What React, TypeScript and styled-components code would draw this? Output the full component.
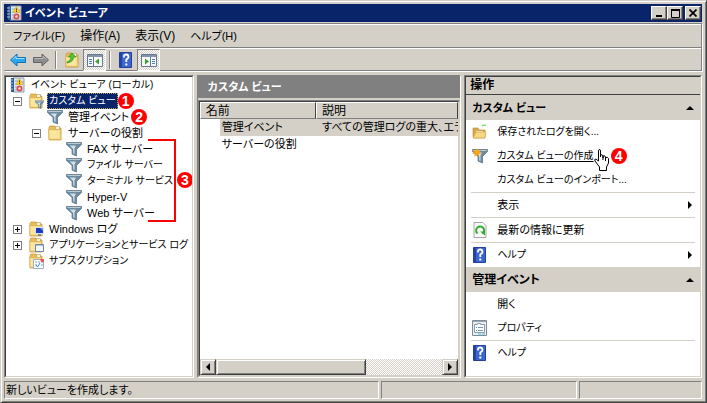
import React from 'react';
import styled, { createGlobalStyle, css } from 'styled-components';

const face = '#d4d0c8';
const shadow = '#808080';
const dark = '#404040';

const Global = createGlobalStyle`
  * { box-sizing: border-box; }
  html, body, #root { height: 100%; }
  body {
    margin: 0;
    background: ${face};
    color: #000;
    font: 12px/16px "Liberation Sans", "Noto Sans CJK JP", sans-serif;
    font-feature-settings: "palt";
  }
  button { font: inherit; font-feature-settings: inherit; color: inherit; padding: 0; border: 0; background: none; text-align: left; white-space: nowrap; }
  ul { margin: 0; padding: 0; list-style: none; }
  h1, h2, h3 { margin: 0; font: inherit; font-weight: bold; white-space: nowrap; }
  svg { display: block; flex: none; }
`;

const raised = css`
  border: 1px solid;
  border-color: ${face} ${dark} ${dark} ${face};
  box-shadow: inset 1px 1px #fff, inset -1px -1px ${shadow};
  background: ${face};
`;

const Window = styled.div`
  ${raised}
  height: 100vh;
  display: flex;
  flex-direction: column;
  padding: 3px 4px 3px 3px;
  overflow: hidden;
`;
const TitleBar = styled.header`
  display: flex;
  align-items: center;
  flex: none;
  height: 18px;
  padding: 0 1px 0 3px;
  background: #0a246a;
  color: #fff;
  h1 { flex: 1; padding-left: 2px; font-size: 11px; }
`;
const WindowButton = styled.button<{ $apart?: boolean }>`
  ${raised}
  border-color: #fff ${dark} ${dark} #fff;
  box-shadow: inset -1px -1px ${shadow};
  display: grid;
  place-items: center;
  width: 16px;
  height: 14px;
  margin-left: ${(p) => (p.$apart ? 2 : 0)}px;
`;
const Bars = styled.div`
  flex: none;
  margin-top: 1px;
  border: 1px solid ${shadow};
  border-left-color: ${face};
  box-shadow: 1px 1px #fff;
`;
const MenuBar = styled.nav`
  display: flex;
  align-items: center;
  gap: 15px;
  height: 24px;
  padding-left: 8px;
  border-top: 1px solid #fff;
  border-bottom: 1px solid ${shadow};
`;
const MenuItem = styled.button<{ $kana?: boolean }>`
  font-size: ${(p) => (p.$kana ? 11 : 12)}px;
`;
const ToolBar = styled.div`
  display: flex;
  align-items: center;
  height: 22px;
  padding-left: 1px;
  border-top: 1px solid #fff;
`;
const Tool = styled.button<{ $pressed?: boolean }>`
  display: grid;
  place-items: center;
  width: 23px;
  height: 22px;
  ${(p) =>
    p.$pressed &&
    css`
      border: 1px solid;
      border-color: ${shadow} #fff #fff ${shadow};
      background: repeating-conic-gradient(#fff 0 25%, ${face} 0 50%) 0 0 / 2px 2px;
    `}
`;
const ToolDivider = styled.span`
  width: 2px;
  height: 18px;
  margin: 0 3px;
  border-left: 1px solid ${shadow};
  border-right: 1px solid #fff;
`;
const Panes = styled.main`
  flex: 1;
  min-height: 0;
  display: grid;
  grid-template-columns: 190fr 265fr 238fr;
  gap: 3px;
  margin-top: 4px;
`;
const Pane = styled.section`
  display: flex;
  flex-direction: column;
  min-width: 0;
  min-height: 0;
  border: 1px solid;
  border-color: ${shadow} #fff #fff ${shadow};
`;
const Well = styled.div`
  flex: 1;
  display: flex;
  flex-direction: column;
  min-height: 0;
  overflow: hidden;
  border: 1px solid;
  border-color: ${dark} ${face} ${face} ${dark};
  background: #fff;
`;

const TreeRow = styled.div<{ $level: number }>`
  display: flex;
  align-items: center;
  height: 16px;
  padding-left: ${(p) => (p.$level ? 7 + (p.$level - 1) * 19 : 4)}px;
`;
const Expander = styled.button`
  display: grid;
  place-items: center;
  width: 9px;
  height: 9px;
  border: 1px solid ${shadow};
`;
const Slot = styled.span<{ $root?: boolean }>`
  flex: none;
  display: flex;
  align-items: center;
  width: ${(p) => (p.$root ? 0 : 15)}px;
`;
const TreeLabel = styled.button<{ $selected?: boolean; $small: boolean }>`
  height: 16px;
  margin-left: 3px;
  padding: 0 2px;
  font-size: ${(p) => (p.$small ? 10 : 11)}px;
  ${(p) =>
    p.$selected &&
    css`
      background: #0a246a;
      color: #fff;
      outline: 1px dotted #b9a45a;
      outline-offset: -1px;
    `}
`;
const Badge = styled.span`
  flex: none;
  display: grid;
  place-items: center;
  width: 16px;
  height: 16px;
  border-radius: 50%;
  background: #f00;
  color: #fff;
  font: bold 14px/16px "Liberation Sans", sans-serif;
`;
const Group = styled.ul`
  position: relative;
`;
const Bracket = styled.span`
  position: absolute;
  top: -2px;
  bottom: -1px;
  left: 142px;
  width: 28px;
  border: 2px solid #f00;
  border-left: 0;
  pointer-events: none;
`;
const GroupBadge = styled(Badge)`
  position: absolute;
  top: 31px;
  left: 171px;
`;

const Caption = styled.h2`
  flex: none;
  height: 22px;
  padding-left: 10px;
  line-height: 22px;
  background: ${shadow};
  color: #fff;
  font-size: 11px;
`;
const ListFrame = styled.div`
  flex: 1;
  display: flex;
  min-height: 0;
  margin-top: 2px;
  border: 1px solid;
  border-color: ${shadow} ${face} ${face} ${shadow};
`;
const List = styled.table`
  width: 100%;
  table-layout: fixed;
  border-collapse: separate;
  border-spacing: 0;
  th {
    ${raised}
    border-color: #fff ${dark} ${shadow} #fff;
    box-shadow: none;
    height: 17px;
    padding: 0 5px;
    font-weight: normal;
    text-align: left;
    line-height: 14px;
  }
  th:first-child { width: 45%; }
  td { height: 17px; padding: 0 5px; line-height: 17px; font-size: 11px; white-space: nowrap; overflow: hidden; }
`;
const Cell = styled.span<{ $on?: boolean; $first?: boolean }>`
  display: block;
  margin: 0 -5px 0 ${(p) => (p.$first ? 15 : -5)}px;
  padding-left: ${(p) => (p.$first ? 2 : 6)}px;
  background: ${(p) => (p.$on ? face : 'none')};
`;
const ScrollBar = styled.div`
  display: flex;
  height: 16px;
  margin-top: auto;
  background: repeating-conic-gradient(#fff 0 25%, ${face} 0 50%) 0 0 / 2px 2px;
`;
const ScrollButton = styled.button`
  ${raised}
  display: grid;
  place-items: center;
  width: 16px;
`;
const Thumb = styled.div`
  ${raised}
  width: 58%;
  margin-right: auto;
`;

const ActionsTitle = styled.h2`
  flex: none;
  height: 18px;
  padding-left: 4px;
  line-height: 17px;
  background: ${face};
  border-bottom: 1px solid ${dark};
`;
const SectionHead = styled.h3<{ $kana?: boolean }>`
  display: flex;
  flex: none;
  align-items: center;
  justify-content: space-between;
  height: 25px;
  padding: 0 6px;
  background: ${face};
  font-size: ${(p) => (p.$kana ? 11 : 12)}px;
`;
const Action = styled.button<{ $small?: boolean }>`
  display: flex;
  flex: none;
  align-items: center;
  height: 24px;
  margin: 0 6px;
  font-size: ${(p) => (p.$small ? 10 : 11)}px;
  u { text-underline-offset: 2px; }
`;
const ActionIcon = styled.span`
  width: 25px;
`;
const ActionText = styled.span`
  position: relative;
  margin-right: auto;
`;
const Pointer = styled.span`
  position: absolute;
  top: 1px;
  right: -16px;
`;
const PointerBadge = styled(Badge)`
  position: absolute;
  top: 0;
  right: -33px;
`;
const Rule = styled.hr`
  flex: none;
  width: calc(100% - 10px);
  height: 1px;
  margin: 0 5px;
  border: 0;
  background: ${face};
`;
const StatusBar = styled.footer`
  flex: none;
  display: grid;
  grid-template-columns: 375fr 196fr 123fr;
  gap: 2px;
  height: 18px;
  margin-top: 3px;
  font-size: 11px;
`;
const StatusCell = styled.div`
  padding-left: 1px;
  border: 1px solid;
  border-color: ${shadow} #fff #fff ${shadow};
`;

type IconProps = { size?: number; children: React.ReactNode };
const Icon = ({ size = 16, children }: IconProps) => (
  <svg width={size} height={size} viewBox="0 0 16 16" aria-hidden="true">{children}</svg>
);

const LogIcon = () => (
  <Icon>
    <path d="M3 1h11v14H3z" fill="#dbe6f3" stroke="#8e9db3" />
    <path d="M1 1h3v14H1z" fill="#315a91" />
    <path d="M0 3h3M0 6h3M0 9h3M0 12h3" stroke="#b6c8dd" />
    <path d="M5 4h3M5 7h2M5 10h2M5 13h2M12 5h2" stroke="#93a7c1" />
    <path d="m9.500 1.500 3.500 6H6z" fill="#ffd51c" stroke="#d8a400" strokeWidth=".6" />
    <path d="M9.500 3.500v2M9.500 6v1" stroke="#4d3a00" />
    <circle cx="9.500" cy="11.500" r="3" fill="#dc4a4a" />
    <circle cx="9.500" cy="11.500" r="1.300" fill="#f8dede" />
  </Icon>
);
const folder = (
  <>
    <path d="M2 2.500 3 1h5l1 2h5v12H2z" fill="#e6bd59" stroke="#c19635" strokeWidth=".7" />
    <path d="M8.500 1.500h4v3h-4z" fill="#f6f3df" stroke="#bb9650" strokeWidth=".6" />
    <path d="M1.500 4.500h12l.5 10H2z" fill="#f9dd8b" stroke="#d5ad50" strokeWidth=".7" />
    <path d="M3 6h9v7H3z" fill="#fce9a9" opacity=".7" />
  </>
);
const FolderIcon = () => <Icon>{folder}</Icon>;
const funnel = (
  <>
    <path d="M.5 1.500h15v2L10.500 8.500V15L6 13V8.500L.5 3.500z" fill="#6d8ba0" stroke="#526c80" strokeWidth=".7" />
    <path d="M1.500 2.500h13" stroke="#b9cbd7" />
    <path d="M3.500 4.500h6.500L8.500 7.500V13l-1.300-.7V8z" fill="#d3e0e8" />
  </>
);
const FunnelIcon = () => <Icon>{funnel}</Icon>;
const FolderFunnelIcon = () => (
  <Icon>{folder}<g transform="translate(7 7) scale(.57)">{funnel}</g></Icon>
);
const WindowsLogIcon = () => (
  <Icon>
    {folder}
    <path d="M7.500 6.500h8v6h-8z" fill="#1838bd" stroke="#dce6f3" />
    <path d="m12 7 3 0v3z" fill="#6d95ef" />
    <path d="M10 13h3v2h-3z" fill="#7b8b9f" />
  </Icon>
);
const AppsLogIcon = () => (
  <Icon>
    {folder}
    <path d="M7.500 7.500h8v7h-8z" fill="#f4f7fb" stroke="#7187a5" />
    <path d="M8 8.500h7" stroke="#b3c4da" />
  </Icon>
);
const SubscriptionIcon = () => (
  <Icon>
    {folder}
    <path d="M5.500 6.500h10v9h-10z" fill="#fff" stroke="#9faec0" />
    <path d="M7 9h2m1 0h2m1 0h2M7 12h2m4 0h2" stroke="#7b9dcc" />
    <path d="M12 6h4v3h-3z" fill="#e55a56" />
    <path d="m8 12 1.500 2 2.500-4" fill="none" stroke="#328dd3" />
  </Icon>
);
const HelpIcon = () => (
  <Icon>
    <path d="M1.500.5h12v15h-12z" fill="#3c66ce" stroke="#233f9b" />
    <path d="M2 1h2v14H2z" fill="#2144a6" />
    <path d="M6 5.500V4q0-1.500 2.200-1.500T10.500 5q0 1.300-2.200 2.500V10" fill="none" stroke="#fff" strokeWidth="1.800" />
    <path d="M7.300 11.500h2v2h-2z" fill="#fff" />
  </Icon>
);
const ArrowIcon = ({ forward }: { forward?: boolean }) => (
  <Icon>
    <g transform={forward ? 'translate(16 0) scale(-1 1)' : undefined}>
      <path d="M.5 8 7 2v3.500h8.500v5H7V14z" fill={forward ? '#8d8d8d' : '#2ba5ec'} stroke={forward ? '#626262' : '#176fae'} />
      <path d="M2.500 7.500 6 4.300V6.500h8.500" fill="none" stroke={forward ? '#bcbcbc' : '#9de0ff'} />
    </g>
  </Icon>
);
const UpFolderIcon = () => (
  <Icon>
    {folder}
    <path d="M3 10q4-1 4-5H4.500L8 1l4 4H9.500q0 5-6.500 6z" fill="#55c736" stroke="#278e1e" strokeWidth=".7" />
  </Icon>
);
const PaneIcon = ({ forward }: { forward?: boolean }) => (
  <Icon>
    <g transform={forward ? 'translate(16 0) scale(-1 1)' : undefined}>
      <path d="M.5 2.500h15v12H.5z" fill="#f7f9fb" stroke="#68798e" />
      <path d="M1 4h14" stroke="#8295ad" strokeWidth="2" />
      <path d="M6.500 5v9" stroke="#68798e" />
      <path d="M2 7.500h3M2 9.500h3M2 11.500h3" stroke="#4685c5" />
      <path d="m8 9.500 4-3v6z" fill="#36a52b" />
    </g>
  </Icon>
);
const OpenFolderIcon = () => (
  <Icon>
    <path d="M1 13V4h5l1 2h6v8H2z" fill="#d8a849" stroke="#b58836" strokeWidth=".6" />
    <path d="M4 7h7v5H4z" fill="#f6f1d6" />
    <path d="m1 14 3-6h10l-1 6z" fill="#f8d783" stroke="#c99b42" strokeWidth=".6" />
    <path d="M10 2q2-1.500 4-.5" fill="none" stroke="#58e94a" strokeWidth="1.300" />
  </Icon>
);
const NewFilterIcon = () => (
  <Icon>{funnel}<path d="m5 0 1 2.500L9 2 7.500 4 10 5.500l-3 .3L7 9 5 6.500 2.500 9V6L0 5.500 2.500 4 0 2l3.500.5z" fill="#f7a51d" /></Icon>
);
const RefreshIcon = () => (
  <Icon>
    <path d="M2 .5h9l3 3v12H2z" fill="#fafafa" stroke="#a6a6a6" />
    <path d="M5.500 11.500a4 4 0 1 1 5 .2" fill="none" stroke="#31aa2d" strokeWidth="2" />
    <path d="M8 9.500h5v4z" fill="#31aa2d" />
  </Icon>
);
const PropertiesIcon = () => (
  <Icon>
    <path d="M.5.500h14v15H.5z" fill="#e8edf2" stroke="#7f8c9b" />
    <path d="M1 1.500h13" stroke="#98a5b4" />
    <path d="M2.500 4.500h3v-1h3v1h4v8h-10z" fill="#fff" stroke="#8b9aac" />
    <path d="M4 7.500h1M4 10.500h1" stroke="#258bd1" />
    <path d="M6 7.500h5M6 10.500h5" stroke="#8292a5" />
    <path d="M6 14h3M10 14h3" stroke="#46bddc" />
  </Icon>
);
const Triangle = ({ dir }: { dir: 'up' | 'left' | 'right' }) => (
  <svg width="8" height="8" viewBox="0 0 8 8" aria-hidden="true">
    <path d={dir === 'up' ? 'M0 6h8L4 2z' : dir === 'left' ? 'M6 0v8L2 4z' : 'M2 0v8l4-4z'} />
  </svg>
);
const HandIcon = () => (
  <svg width="16" height="22" viewBox="0 0 16 22" aria-hidden="true">
    <path d="M4.500 12V2Q4.500.5 5.500.500T6.500 2v6-2q2-1 2.500 1v2-2q2-1 2.500 1v2-1.500q2-1 3 1V14l-2 4v3.500h-7V18L1 12q-1-2 1-2z" fill="#fff" stroke="#000" strokeLinejoin="round" />
    <path d="M9 8v3M11.500 9v3" stroke="#000" />
  </svg>
);

type NodeProps = {
  level: number;
  label: string;
  icon: React.ReactNode;
  open?: boolean;
  selected?: boolean;
  badge?: string;
};
const hasWideKana = (s: string) => !/[A-Za-z\u4e00-\u9fff]/.test(s);

const TreeNode = ({ level, label, icon, open, selected, badge }: NodeProps) => (
  <TreeRow $level={level}>
    <Slot $root={!level}>
      {open !== undefined && (
        <Expander aria-label={label} aria-expanded={open}>
          <svg width="5" height="5" viewBox="0 0 5 5"><path d={open ? 'M0 2.500h5' : 'M0 2.500h5M2.500 0v5'} stroke="#000" /></svg>
        </Expander>
      )}
    </Slot>
    {icon}
    <TreeLabel $selected={selected} $small={hasWideKana(label)}>{label}</TreeLabel>
    {badge && <Badge>{badge}</Badge>}
  </TreeRow>
);

const roles = ['FAX サーバー', 'ファイル サーバー', 'ターミナル サービス', 'Hyper-V', 'Web サーバー'];

type ActionProps = { label: string; icon?: React.ReactNode; submenu?: boolean; small?: boolean };
const ActionItem = ({ label, icon, submenu, small }: ActionProps) => (
  <Action $small={small}>
    <ActionIcon>{icon}</ActionIcon>
    <ActionText>{label}</ActionText>
    {submenu && <Triangle dir="right" />}
  </Action>
);

export default function App() {
  return (
    <>
      <Global />
      <Window>
        <TitleBar>
          <LogIcon />
          <h1>イベント ビューア</h1>
          <WindowButton aria-label="最小化"><svg width="8" height="8"><path d="M1 7h6" stroke="#000" strokeWidth="2" /></svg></WindowButton>
          <WindowButton aria-label="最大化"><svg width="9" height="9"><path d="M.5 1h8M.5 0v8.500h8V0" fill="none" stroke="#000" /><path d="M0 1h9" stroke="#000" strokeWidth="2" /></svg></WindowButton>
          <WindowButton aria-label="閉じる" $apart><svg width="8" height="8"><path d="m.5.500 7 7m0-7-7 7" stroke="#000" strokeWidth="1.700" /></svg></WindowButton>
        </TitleBar>
        <Bars>
          <MenuBar>
            <MenuItem $kana>ファイル(F)</MenuItem>
            <MenuItem>操作(A)</MenuItem>
            <MenuItem>表示(V)</MenuItem>
            <MenuItem $kana>ヘルプ(H)</MenuItem>
          </MenuBar>
          <ToolBar>
            <Tool aria-label="戻る"><ArrowIcon /></Tool>
            <Tool aria-label="進む"><ArrowIcon forward /></Tool>
            <ToolDivider />
            <Tool aria-label="上へ"><UpFolderIcon /></Tool>
            <Tool aria-label="ツリー" $pressed><PaneIcon /></Tool>
            <ToolDivider />
            <Tool aria-label="ヘルプ"><HelpIcon /></Tool>
            <Tool aria-label="操作ウィンドウ" $pressed><PaneIcon forward /></Tool>
          </ToolBar>
        </Bars>
        <Panes>
          <Pane>
            <Well>
              <TreeNode level={0} label="イベント ビューア (ローカル)" icon={<LogIcon />} />
              <TreeNode level={1} label="カスタム ビュー" icon={<FolderFunnelIcon />} open selected badge="1" />
              <TreeNode level={2} label="管理イベント" icon={<FunnelIcon />} badge="2" />
              <TreeNode level={2} label="サーバーの役割" icon={<FolderIcon />} open />
              <Group>
                {roles.map((r) => (
                  <li key={r}><TreeNode level={3} label={r} icon={<FunnelIcon />} /></li>
                ))}
                <Bracket />
                <GroupBadge>3</GroupBadge>
              </Group>
              <TreeNode level={1} label="Windows ログ" icon={<WindowsLogIcon />} open={false} />
              <TreeNode level={1} label="アプリケーションとサービス ログ" icon={<AppsLogIcon />} open={false} />
              <TreeNode level={1} label="サブスクリプション" icon={<SubscriptionIcon />} />
            </Well>
          </Pane>
          <Pane>
            <Caption>カスタム ビュー</Caption>
            <ListFrame>
              <Well>
                <List>
                  <thead><tr><th>名前</th><th>説明</th></tr></thead>
                  <tbody>
                    <tr>
                      <td><Cell $on $first>管理イベント</Cell></td>
                      <td><Cell $on>すべての管理ログの重大、エラ</Cell></td>
                    </tr>
                    <tr><td><Cell $first>サーバーの役割</Cell></td><td /></tr>
                  </tbody>
                </List>
                <ScrollBar>
                  <ScrollButton aria-label="左へ"><Triangle dir="left" /></ScrollButton>
                  <Thumb />
                  <ScrollButton aria-label="右へ"><Triangle dir="right" /></ScrollButton>
                </ScrollBar>
              </Well>
            </ListFrame>
          </Pane>
          <Pane>
            <Well>
              <ActionsTitle>操作</ActionsTitle>
              <SectionHead $kana>カスタム ビュー<Triangle dir="up" /></SectionHead>
              <ActionItem label="保存されたログを開く..." icon={<OpenFolderIcon />} small />
              <Action $small>
                <ActionIcon><NewFilterIcon /></ActionIcon>
                <ActionText>
                  <u>カスタム ビューの作成</u>
                  <Pointer><HandIcon /></Pointer>
                  <PointerBadge>4</PointerBadge>
                </ActionText>
              </Action>
              <ActionItem label="カスタム ビューのインポート..." small />
              <Rule />
              <ActionItem label="表示" submenu />
              <Rule />
              <ActionItem label="最新の情報に更新" icon={<RefreshIcon />} />
              <Rule />
              <ActionItem label="ヘルプ" icon={<HelpIcon />} submenu small />
              <SectionHead>管理イベント<Triangle dir="up" /></SectionHead>
              <ActionItem label="開く" />
              <ActionItem label="プロパティ" icon={<PropertiesIcon />} small />
              <Rule />
              <ActionItem label="ヘルプ" icon={<HelpIcon />} small />
            </Well>
          </Pane>
        </Panes>
        <StatusBar>
          <StatusCell>新しいビューを作成します。</StatusCell>
          <StatusCell />
          <StatusCell />
        </StatusBar>
      </Window>
    </>
  );
}
